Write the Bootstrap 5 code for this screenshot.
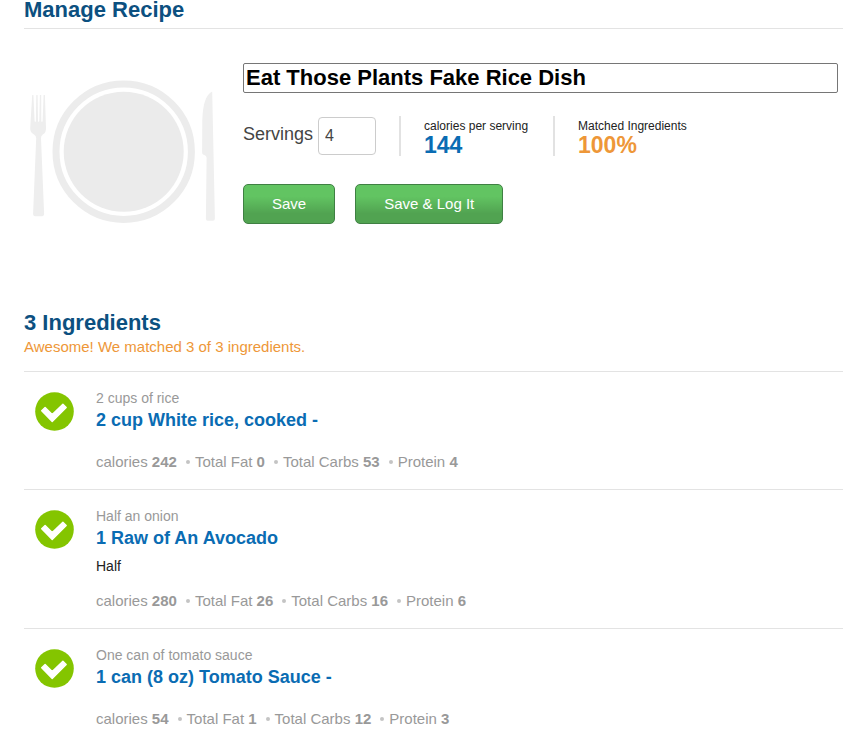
<!DOCTYPE html>
<html lang="en">
<head>
<meta charset="utf-8">
<meta name="viewport" content="width=device-width, initial-scale=1">
<title>Manage Recipe</title>
<link href="https://cdn.jsdelivr.net/npm/bootstrap@5.3.0/dist/css/bootstrap.min.css" rel="stylesheet">
<style>
  body { font-family: "Liberation Sans", Arial, sans-serif; font-size: 15px; line-height: 20px; color: #222; background: #fff; }
  .page { padding: 0 14px 0 24px; }
  .page-title { font-size: 22px; line-height: 20px; font-weight: 700; color: #0c5080; padding-bottom: 8px; border-bottom: 1px solid #e3e3e3; margin: 0; }
  .recipe { padding: 34px 5px 0 0; gap: 24px; }
  .plate { width: 195px; height: 160px; flex: none; margin-top: 7px; }
  .recipe-name { height: 30px; padding: 0 2px; border: 1px solid #767676; border-radius: 2px; font-size: 22px; line-height: 26px; font-weight: 700; color: #000; }
  .facts { margin-top: 23px; }
  .servings-label { font-size: 18px; line-height: 24px; color: #444; padding: 6px 5px 0 0; }
  .servings-input { width: 58px; height: 38px; margin-top: 1px; padding: 0 6px; border: 1px solid #ccc; border-radius: 4px; font-size: 16px; color: #444; }
  .fact { border-left: 2px solid #e2e2e2; min-width: 131px; height: 40px; padding: 2px 0 0 23px; margin-left: 23px; }
  .fact-label { font-size: 12px; line-height: 16px; }
  .fact-value { font-size: 23px; line-height: 22px; font-weight: 700; }
  .c-link { color: #0a6cb3; }
  .c-orange { color: #ee9738; }
  .actions { gap: 20px; margin-top: 28px; }
  .btn-green { height: 40px; padding: 0 28px; font-size: 15px; line-height: 20px; color: #fff; border: 1px solid #3f8043; border-radius: 5px; background: linear-gradient(#62c462 0%, #62c462 30%, #51a351 75%, #51a351 100%); }
  .btn-green:hover { color: #fff; background: #51a351; }
  .ingredients { margin-top: 80px; }
  .ingredients h2 { font-size: 22px; line-height: 26px; font-weight: 700; color: #0c5080; margin: 0; }
  .match-note { margin: 0 0 13px; line-height: 22px; }
  .item { border-top: 1px solid #e3e3e3; padding: 16px 0 17px 11px; gap: 22px; }
  .item-check { width: 39px; height: 39px; flex: none; margin-top: 4px; }
  .item-source { font-size: 14px; color: #999; }
  .item-name { display: block; font-size: 18px; line-height: 24px; font-weight: 700; text-decoration: none; }
  .item-note { font-size: 14px; color: #222; margin-top: 6px; }
  .nutrition { color: #999; margin: 20px 0 0; }
  .item-note + .nutrition { margin-top: 15px; }
  .nutrition li { display: flex; align-items: center; white-space: pre; }
  .nutrition li + li::before { content: ""; width: 4px; height: 4px; border-radius: 50%; background: #c4c4c4; margin: 0 5px 0 9px; }
</style>
</head>
<body>
<svg class="d-none" aria-hidden="true">
  <symbol id="check" viewBox="0 0 39 39">
    <circle cx="19.500" cy="19.500" r="19.300" fill="#84c500"/>
    <path d="M6.700 18.800 10.100 15.400 17.200 22.500 27.900 12.300 31.200 15.600 17.200 29.500z" fill="#fff" stroke="#fff" stroke-width="1.400" stroke-linejoin="round"/>
  </symbol>
</svg>
<main class="page">
  <h1 class="page-title">Manage Recipe</h1>

  <form class="recipe d-flex align-items-start">
    <svg class="plate" viewBox="24 70 195 160" role="img" aria-label="Plate with fork and knife">
      <circle cx="123.700" cy="151.700" r="67.700" fill="none" stroke="#ececec" stroke-width="7"/>
      <circle cx="123.700" cy="151.700" r="60" fill="#ebebeb"/>
      <path d="M32.200 95h1.200L34.600 121q.7 2 1.300 0L36.300 95h1.300L38 121q.7 2 1.300 0L39.900 95h1.300L41.300 121q.6 2 1.300 0L43.600 95h1.300L46 128q.1 5-3.200 6.500Q41 135.600 41 138L44.100 213.500Q44.200 216.300 42 216.300H35.200Q33 216.300 33.100 213.500L36.200 138Q36.200 135.600 34 134.500 30 132.500 30.200 128z" fill="#eee"/>
      <path d="M212.200 91.500 214.900 218.500q0 2.300-2 2.300h-5q-2.200 0-2-2.300L206.600 158q-.1-2.600-3-3.300-1.600-.4-1.500-2.500L202.300 120Q203 96 212.200 91.500z" fill="#efefef"/>
    </svg>
    <div class="flex-grow-1">
      <input class="recipe-name d-block w-100" type="text" value="Eat Those Plants Fake Rice Dish" aria-label="Recipe name">
      <div class="facts d-flex flex-wrap align-items-start">
        <label class="servings-label" for="servings">Servings</label>
        <input class="servings-input" id="servings" type="text" value="4">
        <div class="fact">
          <div class="fact-label">calories per serving</div>
          <div class="fact-value c-link">144</div>
        </div>
        <div class="fact">
          <div class="fact-label">Matched Ingredients</div>
          <div class="fact-value c-orange">100%</div>
        </div>
      </div>
      <div class="actions d-flex flex-wrap">
        <button type="button" class="btn btn-green">Save</button>
        <button type="button" class="btn btn-green">Save &amp; Log It</button>
      </div>
    </div>
  </form>

  <section class="ingredients">
    <h2>3 Ingredients</h2>
    <p class="match-note c-orange">Awesome! We matched 3 of 3 ingredients.</p>

    <article class="item d-flex align-items-start">
      <svg class="item-check" aria-label="Matched"><use href="#check"/></svg>
      <div>
        <div class="item-source">2 cups of rice</div>
        <a class="item-name c-link" href="#">2 cup White rice, cooked -</a>
        <ul class="nutrition list-unstyled d-flex flex-wrap">
          <li>calories <b>242</b></li><li>Total Fat <b>0</b></li><li>Total Carbs <b>53</b></li><li>Protein <b>4</b></li>
        </ul>
      </div>
    </article>

    <article class="item d-flex align-items-start">
      <svg class="item-check" aria-label="Matched"><use href="#check"/></svg>
      <div>
        <div class="item-source">Half an onion</div>
        <a class="item-name c-link" href="#">1 Raw of An Avocado</a>
        <div class="item-note">Half</div>
        <ul class="nutrition list-unstyled d-flex flex-wrap">
          <li>calories <b>280</b></li><li>Total Fat <b>26</b></li><li>Total Carbs <b>16</b></li><li>Protein <b>6</b></li>
        </ul>
      </div>
    </article>

    <article class="item d-flex align-items-start">
      <svg class="item-check" aria-label="Matched"><use href="#check"/></svg>
      <div>
        <div class="item-source">One can of tomato sauce</div>
        <a class="item-name c-link" href="#">1 can (8 oz) Tomato Sauce -</a>
        <ul class="nutrition list-unstyled d-flex flex-wrap">
          <li>calories <b>54</b></li><li>Total Fat <b>1</b></li><li>Total Carbs <b>12</b></li><li>Protein <b>3</b></li>
        </ul>
      </div>
    </article>
  </section>
</main>
<script src="https://cdn.jsdelivr.net/npm/bootstrap@5.3.0/dist/js/bootstrap.bundle.min.js"></script>
</body>
</html>
